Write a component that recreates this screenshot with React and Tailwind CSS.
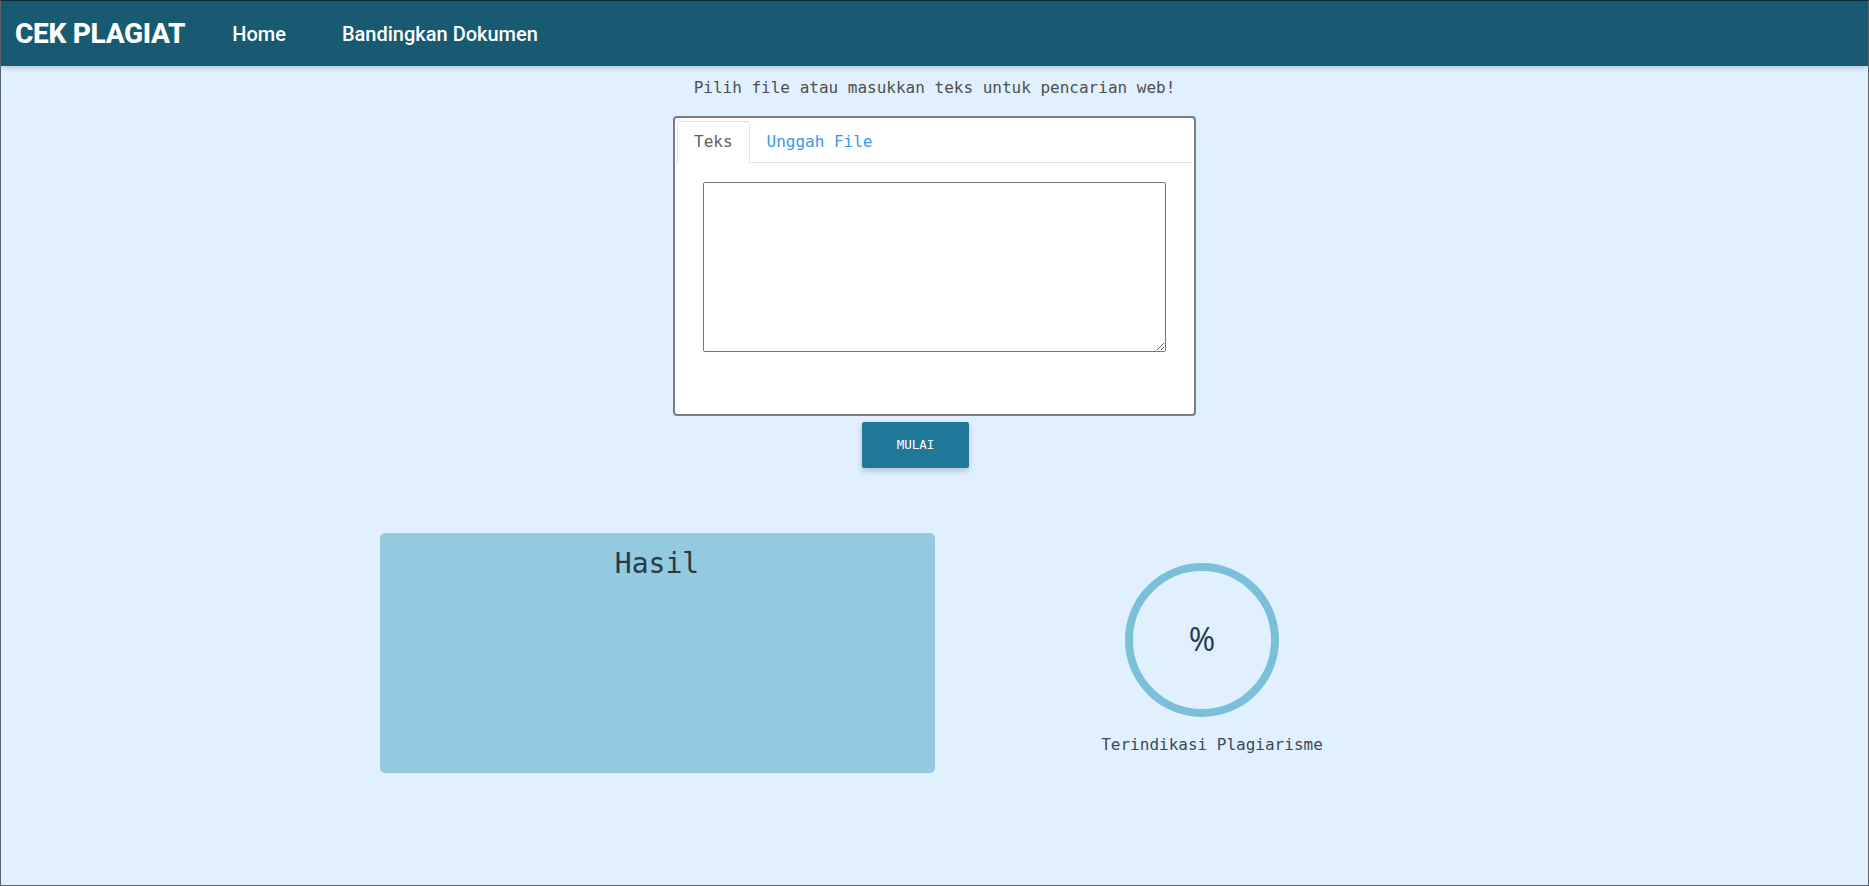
export default function App() {
  const mono = { fontFamily: '"DejaVu Sans Mono", "Liberation Mono", monospace' };
  return (
    <div className="h-[886px] w-full overflow-hidden border border-[#5c6369] border-t-[#0e2a36] bg-[#e0f0fe]" style={mono}>
      <nav
        className="flex h-[65px] items-center bg-[#175a72] text-white shadow-[0_2px_5px_rgba(0,0,0,0.18)]"
        style={{ fontFamily: 'Roboto, "Liberation Sans", sans-serif' }}
      >
        <span className="ml-[14px] text-[28px] font-extrabold tracking-[-0.3px]">CEK PLAGIAT</span>
        <span className="ml-[47px] text-[20px] font-medium">Home</span>
        <span className="ml-[56px] text-[20px] font-medium">Bandingkan Dokumen</span>
      </nav>

      <div className="flex flex-col items-center">
        <p className="mt-[11px] text-[16px] leading-[22px] text-[#4f4f4f]">
          Pilih file atau masukkan teks untuk pencarian web!
        </p>

        <div className="mt-[17px] flex h-[300px] w-[523px] flex-col rounded-[4px] border-2 border-[#7b7d80] bg-white px-[2px] pt-[3px]">
          <div className="flex border-b border-[#dee2e6]">
            <div className="-mb-px flex h-[42px] items-center rounded-t-[4px] border border-[#dee2e6] border-b-white bg-white px-4 text-[16px] text-[#606060]">
              Teks
            </div>
            <div className="-mb-px flex h-[42px] items-center border border-transparent px-4 text-[16px] text-[#3b97f5]">
              Unggah File
            </div>
          </div>
          <div className="px-[26px] pt-[19px]">
            <textarea className="block h-[170px] w-full rounded-[2px] border border-[#767676] bg-white" />
          </div>
        </div>

        <button className="mt-[6px] mr-[38px] h-[46px] w-[107px] rounded-[2px] bg-[#1f7898] text-[12.5px] text-white shadow-[0_3px_6px_rgba(0,0,0,0.2)]">
          MULAI
        </button>

        <div className="mt-[65px] grid w-[1110px] grid-cols-2">
          <div className="h-[240px] rounded-[5px] bg-[#93cae0] pt-[14px] text-center text-[28px] leading-[34px] text-[#2b3945]">
            Hasil
          </div>
          <div className="flex flex-col items-center pt-[30px]">
            <div className="mr-[20px] flex h-[154px] w-[154px] items-center justify-center rounded-full border-[8px] border-[#7bbfd8]">
              <span className="-mt-[3px] text-[32px] text-[#263a4c]" style={{ fontFamily: '"Open Sans", "Noto Sans", sans-serif' }}>
                %
              </span>
            </div>
            <p className="mt-[17px] text-[16px] leading-[22px] text-[#3d4a58]">Terindikasi Plagiarisme</p>
          </div>
        </div>
      </div>
    </div>
  );
}
